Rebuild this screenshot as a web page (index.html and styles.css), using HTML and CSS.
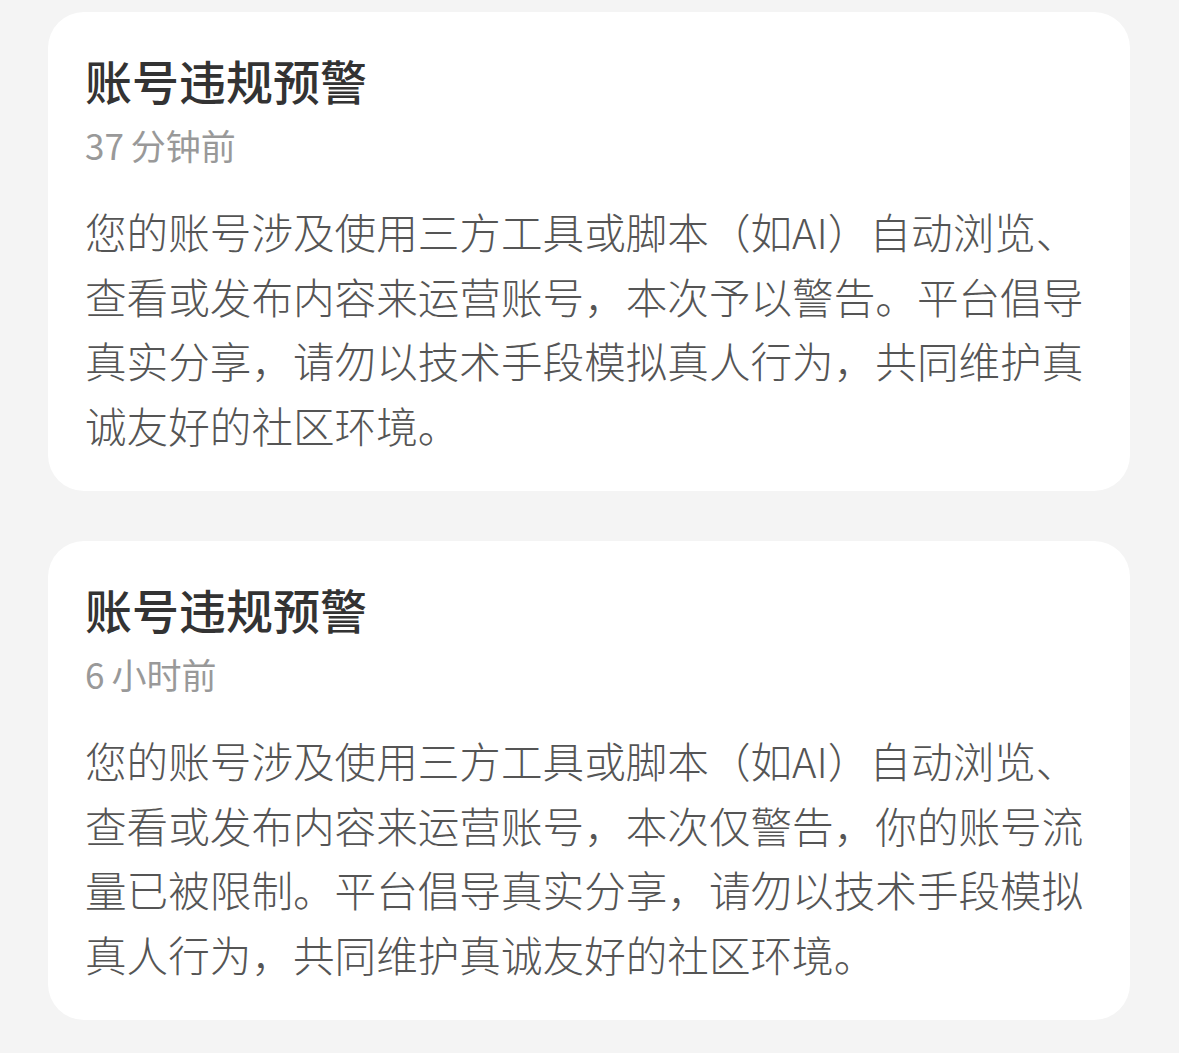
FILE: index.html
```html
<!DOCTYPE html>
<html lang="zh-CN">
<head>
<meta charset="utf-8">
<title>通知</title>
<link rel="stylesheet" href="styles.css">
</head>
<body>
<main class="list">
  <section class="card">
    <h2 class="title">账号违规预警</h2>
    <div class="time">37<span class="gap"></span>分钟前</div>
    <p class="body">您的账号涉及使用三方工具或脚本（如AI）自动浏览、查看或发布内容来运营账号，本次予以警告。平台倡导真实分享，请勿以技术手段模拟真人行为，共同维护真诚友好的社区环境。</p>
  </section>
  <section class="card">
    <h2 class="title">账号违规预警</h2>
    <div class="time">6<span class="gap"></span>小时前</div>
    <p class="body">您的账号涉及使用三方工具或脚本（如AI）自动浏览、查看或发布内容来运营账号，本次仅警告，你的账号流量已被限制。平台倡导真实分享，请勿以技术手段模拟真人行为，共同维护真诚友好的社区环境。</p>
  </section>
</main>
</body>
</html>
```

FILE: styles.css
```css
html, body {
  margin: 0;
  padding: 0;
  background: #f4f4f4;
}
body {
  font-family: "Noto Sans CJK SC", "Noto Sans", sans-serif;
}
.list {
  display: flex;
  flex-direction: column;
  gap: 50px;
  padding: 12px 49px 0 48px;
}
.card {
  background: #ffffff;
  border-radius: 36px;
  padding: 36px 35px 34px 37px;
}
.title {
  margin: 0;
  font-size: 47px;
  line-height: 64px;
  font-weight: 500;
  color: #333333;
}
.time {
  margin-top: 9px;
  font-size: 35px;
  line-height: 48px;
  color: #999999;
}
.gap {
  display: inline-block;
  width: 7px;
}
.body {
  margin: 30px 0 0;
  font-size: 41.6px;
  line-height: 64.5px;
  font-weight: 300;
  color: #555555;
}
```
